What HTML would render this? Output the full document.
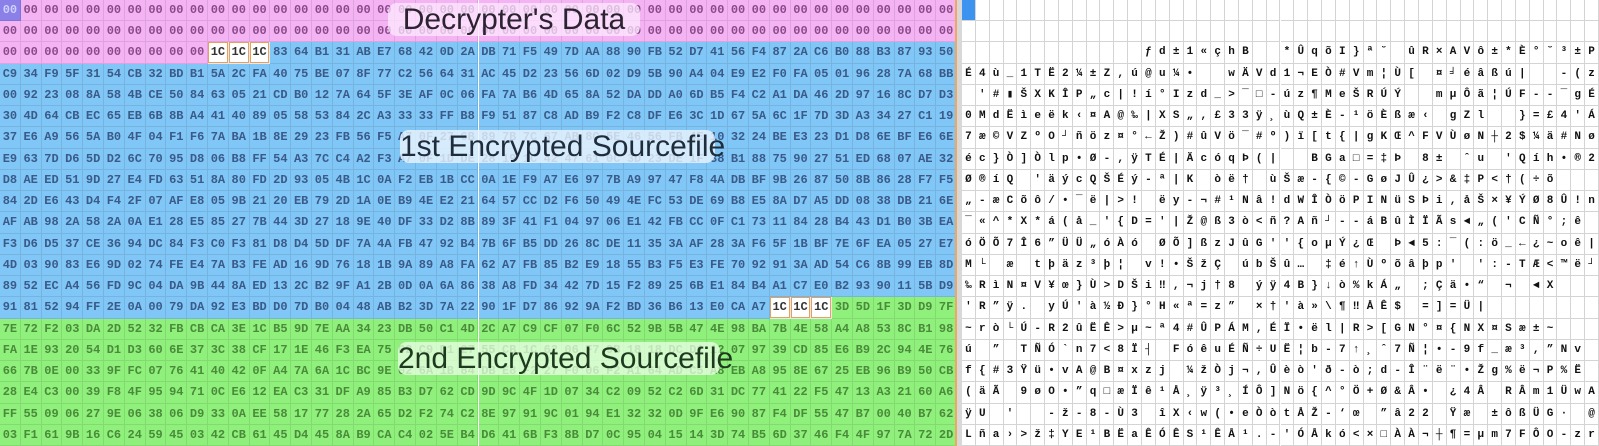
<!DOCTYPE html>
<html><head><meta charset="utf-8">
<style>
*{margin:0;padding:0;box-sizing:border-box}
body{width:1599px;height:446px;overflow:hidden;background:#fff;position:relative;font-family:"Liberation Mono",monospace}
#L{position:absolute;left:0;top:0;width:957px;height:446px}
#R{position:absolute;left:962px;top:0;width:637px;height:446px}
.row{position:absolute;left:0;height:21.24px;white-space:nowrap}
.c{position:absolute;top:0;height:21.24px;line-height:21px;text-align:center;font-size:12px;font-weight:bold;border-right:1px solid rgba(0,0,0,.09);border-bottom:1px solid rgba(0,0,0,.09)}
.p{background:#f4b4f4;color:#8a4a8a}
.b{background:#80c6f6;color:#3a5a88}
.g{background:#8ff07c;color:#4a8a3a}
.w{background:#fff;color:#333;box-shadow:inset 0 0 0 1px #e8a060}
.r{color:#111;font-size:11px;border-right:1px solid #d4d4d4;border-bottom:1px solid #d4d4d4;background:#fff}
#sep{position:absolute;left:955px;top:0;width:7px;height:446px;background:#d8d8d8;border-left:2px solid #f0a860}
.lab{position:absolute;border-radius:9px;font-family:"Liberation Sans","DejaVu Sans",sans-serif;font-size:30px;line-height:33px;text-align:center;white-space:nowrap}
</style></head><body>
<div id="L"></div><div id="sep"></div><div id="R"></div>
<div class="lab" style="left:388px;top:3px;width:252px;height:33px;background:rgba(255,235,255,.72);color:#2b2330">Decrypter's Data</div>
<div class="lab" style="left:400px;top:130px;width:315px;height:33px;background:rgba(235,245,255,.8);color:#1f2c3c">1st Encrypted Sourcefile</div>
<div class="lab" style="left:398px;top:342px;width:322px;height:33px;background:rgba(235,255,230,.75);color:#1e3a1e">2nd Encrypted Sourcefile</div>
<script>
var H=[
"00 00 00 00 00 00 00 00 00 00 00 00 00 00 00 00 00 00 00 00 00 00 00 00 00 00 00 00 00 00 00 00 00 00 00 00 00 00 00 00 00 00 00 00 00 00",
"00 00 00 00 00 00 00 00 00 00 00 00 00 00 00 00 00 00 00 00 00 00 00 00 00 00 00 00 00 00 00 00 00 00 00 00 00 00 00 00 00 00 00 00 00 00",
"00 00 00 00 00 00 00 00 00 00 1C 1C 1C 83 64 B1 31 AB E7 68 42 0D 2A DB 71 F5 49 7D AA 88 90 FB 52 D7 41 56 F4 87 2A C6 B0 88 B3 87 93 50",
"C9 34 F9 5F 31 54 CB 32 BD B1 5A 2C FA 40 75 BE 07 8F 77 C2 56 64 31 AC 45 D2 23 56 6D 02 D9 5B 90 A4 04 E9 E2 F0 FA 05 01 96 28 7A 68 BB",
"00 92 23 08 8A 58 4B CE 50 84 63 05 21 CD B0 12 7A 64 5F 3E AF 0C 06 FA 7A B6 4D 65 8A 52 DA DD A0 6D B5 F4 C2 A1 DA 46 2D 97 16 8C D7 D3",
"30 4D 64 CB EC 65 EB 6B 8B A4 41 40 89 05 58 53 84 2C A3 33 33 FF B8 F9 51 87 C8 AD B9 F2 C8 DF E6 3C 1D 67 5A 6C 1F 7D 3D A3 34 27 C1 19",
"37 E6 A9 56 5A B0 4F 04 F1 F6 7A BA 1B 8E 29 23 FB 56 F5 A7 0F 27 6B 89 7B 7C 67 AB 8C 5E 46 56 FB 4E 10 32 24 BE E3 23 D1 D8 6E BF E6 6E",
"E9 63 7D D6 5D D2 6C 70 95 D8 06 B8 FF 54 A3 7C C4 A2 F3 A7 0F 1D DE 28 19 1C 42 47 61 0C 3D 23 DE 1F 38 B1 88 75 90 27 51 ED 68 07 AE 32",
"D8 AE ED 51 9D 27 E4 FD 63 51 8A 80 FD 2D 93 05 4B 1C 0A F2 EB 1B CC 0A 1E F9 A7 E6 97 7B A9 97 47 F8 4A DB BF 9B 26 87 50 8B 86 28 F7 F5",
"84 2D E6 43 D4 F4 2F 07 AF E8 05 9B 21 20 EB 79 2D 1A 0E B9 4E E2 21 64 57 CC D2 F6 50 49 4E FC 53 DE 69 B8 E5 8A D7 A5 DD 08 38 DB 21 6E",
"AF AB 98 2A 58 2A 0A E1 28 E5 85 27 7B 44 3D 27 18 9E 40 DF 33 D2 8B 89 3F 41 F1 04 97 06 E1 42 FB CC 0F C1 73 11 84 28 B4 43 D1 B0 3B EA",
"F3 D6 D5 37 CE 36 94 DC 84 F3 C0 F3 81 D8 D4 5D DF 7A 4A FB 47 92 B4 7B 6F B5 DD 26 8C DE 11 35 3A AF 28 3A F6 5F 1B BF 7E 6F EA 05 27 E7",
"4D 03 90 83 E6 9D 02 74 FE E4 7A B3 FE AD 16 9D 76 18 1B 9A 89 A8 FA 62 A7 FB 85 B2 E9 18 55 B3 F5 E3 FE 70 92 91 3A AD 54 C6 8B 99 EB 8D",
"89 52 EC A4 56 FD 9C 04 DA 9B 44 8A ED 13 2C B2 9F A1 2B 0D 0A 6A 86 38 A8 FD 34 42 7D 15 F2 89 25 6B E1 84 B4 A1 C7 E0 B2 93 90 11 5B D9",
"91 81 52 94 FF 2E 0A 00 79 DA 92 E3 BD D0 7D B0 04 48 AB B2 3D 7A 22 90 1F D7 86 92 9A F2 BD 36 B6 13 E0 CA A7 1C 1C 1C 3D 5D 1F 3D D9 7F",
"7E 72 F2 03 DA 2D 52 32 FB CB CA 3E 1C B5 9D 7E AA 34 23 DB 50 C1 4D 2C A7 C9 CF 07 F0 6C 52 9B 5B 47 4E 98 BA 7B 4E 58 A4 A8 53 8C B1 98",
"FA 1E 93 20 54 D1 D3 60 6E 37 3C 38 CF 17 1E 46 F3 EA 75 02 C9 D1 27 55 CB 1C 62 06 F7 9B 18 18 DC D1 12 07 97 39 CD 85 E6 B9 2C 94 4E 76",
"66 7B 0E 00 33 9F FC 07 76 41 40 42 0F A4 7A 6A 1C BC 9E 02 6A 1B 84 DB E8 F2 27 F0 06 F2 A1 64 AD C5 A8 EB A8 95 8E 67 25 EB 96 B9 50 CB",
"28 E4 C3 00 39 F8 4F 95 94 71 0C E6 12 EA C3 31 DF A9 85 B3 D7 62 CD 9D 9C 4F 1D 07 34 C2 09 52 C2 6D 31 DC 77 41 22 F5 47 13 A3 21 60 A6",
"FF 55 09 06 27 9E 06 38 06 D9 33 0A EE 58 17 77 28 2A 65 D2 F2 74 C2 8E 97 91 9C 01 94 E1 32 32 0D 9F E6 90 87 F4 DF 55 47 B7 00 40 B7 62",
"03 F1 61 9B 16 C6 24 59 45 03 42 CB 61 45 D4 45 8A B9 CA C4 02 5E B4 D6 41 6B F3 8B D7 0C 95 04 15 14 3D 74 B5 6D 37 46 F4 4F 97 7A 72 2D"
];
var RR=[
"",
"",
"             ƒd±1«çhB  *ÛqõI}ª˘ ûR×AVô±*È°˘³±P",
"É4ù_1TË2¼±Z,ú@u¼•  wÄVd1¬EÒ#Vm¦Ù[ ¤╛éâßú|  -(zh»",
" '#▮ŠXKÎP„c|!í°Izd_>¯□-úz¶MeŠRÚÝ  mµÔã¦ÚF--‾gÉ©Ó",
"0MdËìeëk‹¤A@‰|XS„,£33ÿ¸ùQ±È-¹öÈßæ‹ gZl  }=£4'Á┼",
"7æ©VZºO┘ñöz¤°←Ž)#ûVö¯#º)ï[t{|gKŒ^FVÙøN┼2$¼ä#Nøn¿æ",
"éc}Ò]Òlp•Ø-,ÿTÉ|ÄcóqÞ(|  BGa□=‡Þ 8± ˆu 'Qíh•®2n",
"Ø®íQ 'äýcQŠÉý-ª|K òë† ùŠæ-{©-GøJÛ¿>&‡P<†(÷õ",
"„-æCõô/•¯ë|>! ëy-¬#¹Nâ!dWÎÒöPINüSÞi,åŠ×¥ÝØ8Û!n",
"¯«^*X*á(å_'{D='|Ž@ß3ò<ñ?Añ┘--áBûÌÏÃs◄„('CÑ°;ê",
"óÖÕ7Î6”ÜÜ„óÀó ØÕ]ßzJûG''{oµÝ¿Œ Þ◄5:¯(:ö_←¿~oê|'ç",
"M└ æ tþäz³þ¦ v!•ŠžÇ úbŠû… ‡é↑Ùºõâþp' ':-TÆ<™ë┘",
"‰RìN¤V¥œ}Ù>DŠi‼,¬j†8 ýÿ4B}↓ò%kÁ„ ;Çä•“ ¬ ◄X",
"'R”ÿ. yÚ'à½Ð}°H«ª=z” ×†'à»\\¶‼ÅÊ$ =]=Ü|",
"~rò└Ú-R2ûËÊ>µ~ª4#ÛPÁM,ÉÏ•ël|R>[GN°¤{NX¤Sæ±~",
"ú ” TÑÓ`n7<8Ï┤ FóêuÉÑ÷UË¦b-7↑¸ˆ7Ñ¦•-9f_æ³,”Nv",
"f{#3Ÿü•vA@B¤xzj ¼žÒj¬,Ûèò'ð-ò;d-Î¨ë¨•Žg%ë¬P%Ë",
"(äÃ 9øO•”q□æÏê¹Å¸ÿ³¸ÍÔ]Nö{^°Ö+Ø&Â• ¿4Â RÂm1ÜwA",
"ÿU '  -ž-8-Ù3 îX‹w(•eÒòtÅŽ-‘œ ”â22 Ÿæ ±ôßÜG· @ b",
"Lña›>ž‡YE¹BËaÊÓÊS¹ÊÅ¹.-'ÓÅkó<×□ÀÀ¬┼¶=µm7FÔO-zr-"
];
var rh=446/21, cw=957/46, rc=637/46;
var L=document.getElementById('L'),R=document.getElementById('R'),h='',k='';
for(var i=0;i<21;i++){
 var t=H[i].split(' ');
 h+='<div class="row" style="top:'+(i*rh)+'px;width:957px">';
 for(var j=0;j<46;j++){
  var idx=i*46+j,cl;
  if((i==2&&j>=10&&j<=12)||(i==14&&j>=37&&j<=39))cl='w';
  else if(idx<102)cl='p';
  else if(idx<14*46+37)cl='b';
  else cl='g';
  var st='left:'+(j*cw)+'px;width:'+cw+'px';
  if(i==0&&j==0)st+=';background:#8a80e8;color:#d0d0ff';
  h+='<div class="c '+cl+'" style="'+st+'">'+(t[j]||'00')+'</div>';
 }
 h+='</div>';
 var ch=Array.from(RR[i]||'');
 k+='<div class="row" style="top:'+(i*rh)+'px;width:637px">';
 for(var j=0;j<46;j++){
  var st='left:'+(j*rc)+'px;width:'+rc+'px';
  if(i==0&&j==0)st+=';background:#3c94f0';
  var c=ch[j]||' ';c=c.replace('&','&amp;').replace('<','&lt;').replace('>','&gt;');
  k+='<div class="c r" style="'+st+'">'+c+'</div>';
 }
 k+='</div>';
}
L.innerHTML=h;R.innerHTML=k;
</script>
</body></html>
